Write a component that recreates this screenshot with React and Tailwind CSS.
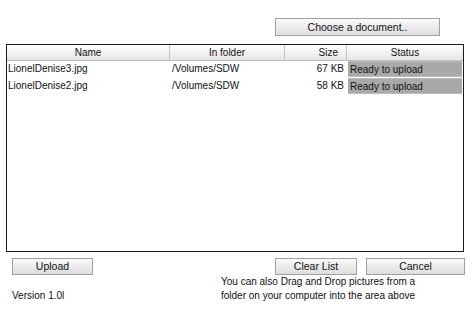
import React from 'react';

const files = [
  { name: 'LionelDenise3.jpg', folder: '/Volumes/SDW', size: '67 KB', status: 'Ready to upload' },
  { name: 'LionelDenise2.jpg', folder: '/Volumes/SDW', size: '58 KB', status: 'Ready to upload' },
];

function Button({ children, className }) {
  return (
    <button
      className={`h-[17px] border border-[#a0a0a0] bg-gradient-to-b from-[#fafafa] to-[#dedede] text-[10.5px] leading-none text-[#111] ${className}`}
    >
      {children}
    </button>
  );
}

export default function App() {
  return (
    <div className="w-[476px] h-[314px] bg-white overflow-hidden font-['Liberation_Sans',Tahoma,sans-serif] text-[#111]">
      {/* top */}
      <div className="flex pt-[18px] pl-[275px]">
        <Button className="w-[165px] h-[18px]">Choose a document..</Button>
      </div>

      {/* file list */}
      <div className="mt-[8px] ml-[6px] w-[458px] h-[208px] border border-[#1a1a1a] bg-white">
        <div className="flex h-[16px] border-b border-[#bdbdbd] bg-gradient-to-b from-white to-[#e6e6e6] text-[10px] leading-[15px]">
          <div className="w-[163px] text-center border-r border-[#c4c4c4]">Name</div>
          <div className="w-[115px] text-center border-r border-[#c4c4c4]">In folder</div>
          <div className="w-[62px] text-right pr-[8px] border-r border-[#c4c4c4]">Size</div>
          <div className="flex-1 text-center">Status</div>
        </div>
        <div>
          {files.map((f) => (
            <div key={f.name} className="flex h-[16px] mb-[1px] text-[10px] leading-[15px]">
              <div className="w-[163px] pl-[1px]">{f.name}</div>
              <div className="w-[115px] pl-[2px]">{f.folder}</div>
              <div className="w-[62px] text-right pr-[3px]">{f.size}</div>
              <div className="flex-1 ml-[1px] mr-[1px] pl-[2px] bg-[#a9a9a9] border-y border-[#bcbcbc]">{f.status}</div>
            </div>
          ))}
        </div>
      </div>

      {/* buttons */}
      <div className="flex mt-[6px]">
        <Button className="ml-[12px] w-[81px]">Upload</Button>
        <Button className="ml-[182px] w-[82px]">Clear List</Button>
        <Button className="ml-[9px] w-[99px]">Cancel</Button>
      </div>

      {/* footer text */}
      <div className="flex items-end">
        <div className="ml-[12px] w-[209px] text-[10px] leading-[14px]">Version 1.0l</div>
        <p className="text-[10px] leading-[14px]">
          You can also Drag and Drop pictures from a
          <br />
          folder on your computer into the area above
        </p>
      </div>
    </div>
  );
}
